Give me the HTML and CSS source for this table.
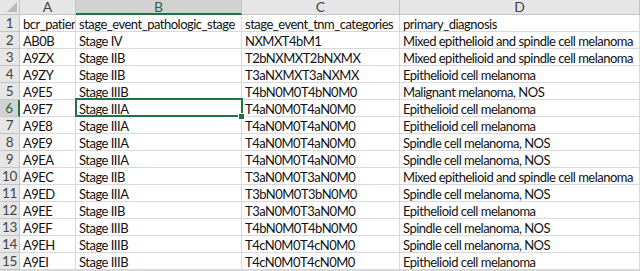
FILE: index.html
```html
<!DOCTYPE html>
<html>
<head>
<meta charset="utf-8">
<link rel="stylesheet" href="styles.css">
</head>
<body>
<div class="sheet">
  <div class="corner"><span class="tri"></span></div>
  <div class="colh">A</div>
  <div class="colh sel">B</div>
  <div class="colh">C</div>
  <div class="colh">D</div>

  <div class="rowh">1</div><div class="cell">bcr_patient_barcode</div><div class="cell">stage_event_pathologic_stage</div><div class="cell">stage_event_tnm_categories</div><div class="cell">primary_diagnosis</div>
  <div class="rowh">2</div><div class="cell">AB0B</div><div class="cell">Stage IV</div><div class="cell">NXMXT4bM1</div><div class="cell">Mixed epithelioid and spindle cell melanoma</div>
  <div class="rowh">3</div><div class="cell">A9ZX</div><div class="cell">Stage IIB</div><div class="cell">T2bNXMXT2bNXMX</div><div class="cell">Mixed epithelioid and spindle cell melanoma</div>
  <div class="rowh">4</div><div class="cell">A9ZY</div><div class="cell">Stage IIB</div><div class="cell">T3aNXMXT3aNXMX</div><div class="cell">Epithelioid cell melanoma</div>
  <div class="rowh">5</div><div class="cell">A9E5</div><div class="cell">Stage IIIB</div><div class="cell">T4bN0M0T4bN0M0</div><div class="cell">Malignant melanoma, NOS</div>
  <div class="rowh sel">6</div><div class="cell">A9E7</div><div class="cell active">Stage IIIA<span class="handle"></span></div><div class="cell">T4aN0M0T4aN0M0</div><div class="cell">Epithelioid cell melanoma</div>
  <div class="rowh">7</div><div class="cell">A9E8</div><div class="cell">Stage IIIA</div><div class="cell">T4aN0M0T4aN0M0</div><div class="cell">Epithelioid cell melanoma</div>
  <div class="rowh">8</div><div class="cell">A9E9</div><div class="cell">Stage IIIA</div><div class="cell">T4aN0M0T4aN0M0</div><div class="cell">Spindle cell melanoma, NOS</div>
  <div class="rowh">9</div><div class="cell">A9EA</div><div class="cell">Stage IIIA</div><div class="cell">T4aN0M0T4aN0M0</div><div class="cell">Spindle cell melanoma, NOS</div>
  <div class="rowh">10</div><div class="cell">A9EC</div><div class="cell">Stage IIB</div><div class="cell">T3aN0M0T3aN0M0</div><div class="cell">Mixed epithelioid and spindle cell melanoma</div>
  <div class="rowh">11</div><div class="cell">A9ED</div><div class="cell">Stage IIIA</div><div class="cell">T3bN0M0T3bN0M0</div><div class="cell">Spindle cell melanoma, NOS</div>
  <div class="rowh">12</div><div class="cell">A9EE</div><div class="cell">Stage IIB</div><div class="cell">T3aN0M0T3aN0M0</div><div class="cell">Epithelioid cell melanoma</div>
  <div class="rowh">13</div><div class="cell">A9EF</div><div class="cell">Stage IIIB</div><div class="cell">T4bN0M0T4bN0M0</div><div class="cell">Spindle cell melanoma, NOS</div>
  <div class="rowh">14</div><div class="cell">A9EH</div><div class="cell">Stage IIIB</div><div class="cell">T4cN0M0T4cN0M0</div><div class="cell">Spindle cell melanoma, NOS</div>
  <div class="rowh">15</div><div class="cell">A9EI</div><div class="cell">Stage IIIB</div><div class="cell">T4cN0M0T4cN0M0</div><div class="cell">Epithelioid cell melanoma</div>
</div>
</body>
</html>
```

FILE: styles.css
```css
html, body {
  margin: 0;
  padding: 0;
  background: #ffffff;
  overflow: hidden;
  width: 640px;
  height: 271px;
}

.sheet {
  display: grid;
  grid-template-columns: 20px 56px 166px 158px 240px;
  grid-template-rows: 15px;
  grid-auto-rows: 17px;
  font-family: "Lato", "Open Sans", sans-serif;
  font-size: 13px;
  letter-spacing: -0.5px;
  color: #111111;
  width: 640px;
  border-bottom: 1px solid #d9d9d9;
}

.corner {
  background: #e6e6e6;
  border-right: 1px solid #c4c4c4;
  border-bottom: 1px solid #c4c4c4;
  position: relative;
  box-sizing: border-box;
}

.tri {
  position: absolute;
  right: 2px;
  bottom: 2px;
  width: 0;
  height: 0;
  border-left: 10px solid transparent;
  border-bottom: 10px solid #b9b9b9;
}

.colh {
  background: #e6e6e6;
  border-right: 1px solid #c4c4c4;
  border-bottom: 1px solid #c4c4c4;
  box-sizing: border-box;
  text-align: center;
  color: #444444;
  line-height: 14px;
  font-size: 14px;
  letter-spacing: 0;
}

.colh.sel {
  background: #d2d2d2;
  color: #1e6b41;
  border-bottom: 2px solid #217346;
  line-height: 13px;
}

.rowh {
  background: #e6e6e6;
  border-right: 1px solid #c4c4c4;
  border-bottom: 1px solid #c4c4c4;
  box-sizing: border-box;
  text-align: center;
  color: #444444;
  line-height: 17px;
  font-size: 13.5px;
  letter-spacing: -0.3px;
}

.rowh.sel {
  background: #d2d2d2;
  color: #1e6b41;
  border-right: 2px solid #217346;
}

.cell {
  border-right: 1px solid #d9d9d9;
  border-bottom: 1px solid #d9d9d9;
  box-sizing: border-box;
  padding: 1px 3px 0;
  line-height: 16px;
  white-space: nowrap;
  overflow: hidden;
}

.cell.active {
  position: relative;
  overflow: visible;
}

.cell.active::before {
  content: "";
  position: absolute;
  left: -1px;
  top: -2px;
  right: -2px;
  bottom: -1px;
  border: 2px solid #217346;
  pointer-events: none;
}

.handle {
  position: absolute;
  right: -4px;
  bottom: -4px;
  width: 5px;
  height: 5px;
  background: #217346;
  border: 1px solid #ffffff;
  z-index: 2;
}
```
